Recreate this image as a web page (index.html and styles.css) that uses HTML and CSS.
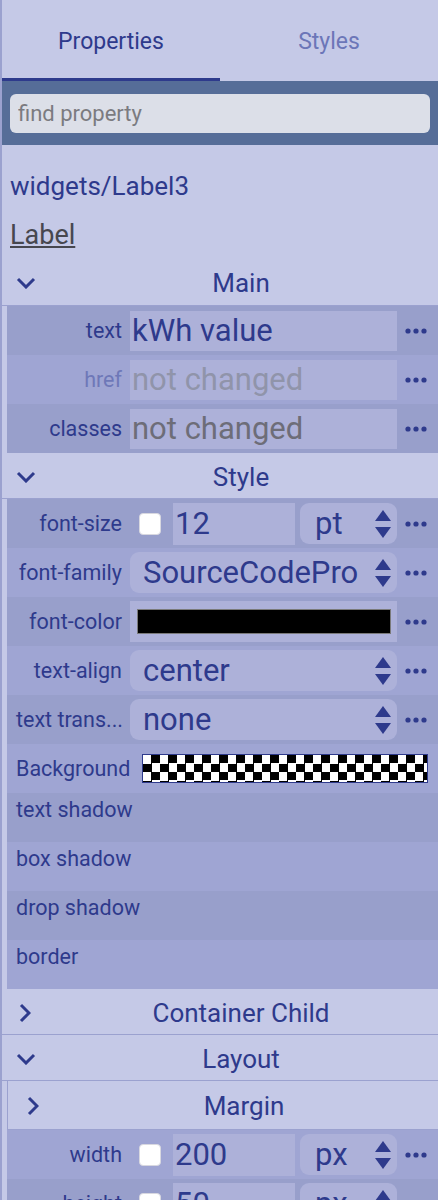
FILE: index.html
```html
<!DOCTYPE html>
<html lang="en">
<head>
    <meta charset="UTF-8">
    <meta name="viewport" content="width=device-width, initial-scale=1.0">
    <title>Properties</title>
    <link rel="stylesheet" href="styles.css">
</head>
<body>
<div class="panel">
    <div class="tabs">
        <div class="tab active">Properties</div>
        <div class="tab">Styles</div>
    </div>

    <div class="search">
        <input type="text" placeholder="find property">
    </div>

    <div class="path">widgets/Label3</div>
    <div class="type"><a href="#">Label</a></div>

    <!-- Main -->
    <div class="group-head top">
        <span class="chev"><svg width="20" height="12" viewBox="0 0 20 12"><polyline points="2,2 10,10 18,2"/></svg></span>
        <span class="title">Main</span>
    </div>
    <div class="group-body">
        <div class="prop">
            <label>text</label>
            <div class="val">kWh value</div>
            <span class="more"><svg width="22" height="6" viewBox="0 0 22 6"><circle cx="3" cy="3" r="2.6"/><circle cx="11" cy="3" r="2.6"/><circle cx="19" cy="3" r="2.6"/></svg></span>
        </div>
        <div class="prop">
            <label class="dim">href</label>
            <div class="val empty light">not changed</div>
            <span class="more"><svg width="22" height="6" viewBox="0 0 22 6"><circle cx="3" cy="3" r="2.6"/><circle cx="11" cy="3" r="2.6"/><circle cx="19" cy="3" r="2.6"/></svg></span>
        </div>
        <div class="prop">
            <label>classes</label>
            <div class="val empty">not changed</div>
            <span class="more"><svg width="22" height="6" viewBox="0 0 22 6"><circle cx="3" cy="3" r="2.6"/><circle cx="11" cy="3" r="2.6"/><circle cx="19" cy="3" r="2.6"/></svg></span>
        </div>
    </div>

    <!-- Style -->
    <div class="group-head">
        <span class="chev"><svg width="20" height="12" viewBox="0 0 20 12"><polyline points="2,2 10,10 18,2"/></svg></span>
        <span class="title">Style</span>
    </div>
    <div class="group-body">
        <div class="prop">
            <label>font-size</label>
            <div class="combo">
                <span class="check"></span>
                <span class="num">12</span>
                <span class="select unit"><span class="sel-text">pt</span><svg width="16" height="28" viewBox="0 0 16 28"><polygon points="8,0 16,11 0,11"/><polygon points="0,17 16,17 8,28"/></svg></span>
            </div>
            <span class="more"><svg width="22" height="6" viewBox="0 0 22 6"><circle cx="3" cy="3" r="2.6"/><circle cx="11" cy="3" r="2.6"/><circle cx="19" cy="3" r="2.6"/></svg></span>
        </div>
        <div class="prop">
            <label>font-family</label>
            <span class="select"><span class="sel-text">SourceCodePro</span><svg width="16" height="28" viewBox="0 0 16 28"><polygon points="8,0 16,11 0,11"/><polygon points="0,17 16,17 8,28"/></svg></span>
            <span class="more"><svg width="22" height="6" viewBox="0 0 22 6"><circle cx="3" cy="3" r="2.6"/><circle cx="11" cy="3" r="2.6"/><circle cx="19" cy="3" r="2.6"/></svg></span>
        </div>
        <div class="prop">
            <label>font-color</label>
            <div class="val color"><span class="swatch"></span></div>
            <span class="more"><svg width="22" height="6" viewBox="0 0 22 6"><circle cx="3" cy="3" r="2.6"/><circle cx="11" cy="3" r="2.6"/><circle cx="19" cy="3" r="2.6"/></svg></span>
        </div>
        <div class="prop">
            <label>text-align</label>
            <span class="select"><span class="sel-text">center</span><svg width="16" height="28" viewBox="0 0 16 28"><polygon points="8,0 16,11 0,11"/><polygon points="0,17 16,17 8,28"/></svg></span>
            <span class="more"><svg width="22" height="6" viewBox="0 0 22 6"><circle cx="3" cy="3" r="2.6"/><circle cx="11" cy="3" r="2.6"/><circle cx="19" cy="3" r="2.6"/></svg></span>
        </div>
        <div class="prop">
            <label>text trans...</label>
            <span class="select"><span class="sel-text">none</span><svg width="16" height="28" viewBox="0 0 16 28"><polygon points="8,0 16,11 0,11"/><polygon points="0,17 16,17 8,28"/></svg></span>
            <span class="more"><svg width="22" height="6" viewBox="0 0 22 6"><circle cx="3" cy="3" r="2.6"/><circle cx="11" cy="3" r="2.6"/><circle cx="19" cy="3" r="2.6"/></svg></span>
        </div>
        <div class="prop wide">
            <label>Background</label>
            <span class="checker"></span>
        </div>
        <div class="prop sub">text shadow</div>
        <div class="prop sub">box shadow</div>
        <div class="prop sub">drop shadow</div>
        <div class="prop sub">border</div>
    </div>

    <!-- Container Child -->
    <div class="group-head">
        <span class="chev closed"><svg width="12" height="20" viewBox="0 0 12 20"><polyline points="2,2 10,10 2,18"/></svg></span>
        <span class="title">Container Child</span>
    </div>

    <!-- Layout -->
    <div class="group-head">
        <span class="chev"><svg width="20" height="12" viewBox="0 0 20 12"><polyline points="2,2 10,10 18,2"/></svg></span>
        <span class="title">Layout</span>
    </div>
    <div class="group-body">
        <div class="group-head nested">
            <span class="chev closed"><svg width="12" height="20" viewBox="0 0 12 20"><polyline points="2,2 10,10 2,18"/></svg></span>
            <span class="title">Margin</span>
        </div>
        <div class="prop">
            <label>width</label>
            <div class="combo">
                <span class="check"></span>
                <span class="num">200</span>
                <span class="select unit"><span class="sel-text">px</span><svg width="16" height="28" viewBox="0 0 16 28"><polygon points="8,0 16,11 0,11"/><polygon points="0,17 16,17 8,28"/></svg></span>
            </div>
            <span class="more"><svg width="22" height="6" viewBox="0 0 22 6"><circle cx="3" cy="3" r="2.6"/><circle cx="11" cy="3" r="2.6"/><circle cx="19" cy="3" r="2.6"/></svg></span>
        </div>
        <div class="prop">
            <label>height</label>
            <div class="combo">
                <span class="check"></span>
                <span class="num">50</span>
                <span class="select unit"><span class="sel-text">px</span><svg width="16" height="28" viewBox="0 0 16 28"><polygon points="8,0 16,11 0,11"/><polygon points="0,17 16,17 8,28"/></svg></span>
            </div>
            <span class="more"><svg width="22" height="6" viewBox="0 0 22 6"><circle cx="3" cy="3" r="2.6"/><circle cx="11" cy="3" r="2.6"/><circle cx="19" cy="3" r="2.6"/></svg></span>
        </div>
    </div>
</div>
</body>
</html>
```

FILE: styles.css
```css
body {
    margin: 0;
    font-family: Roboto, "Noto Sans", sans-serif;
    background: #c5c9e7;
    color: #2e3a8c;
}
.panel {
    border-left: 2px solid #9ba1cf;
    min-height: 100vh;
}

/* tabs */
.tabs {
    display: flex;
}
.tab {
    flex: 1;
    height: 78px;
    line-height: 84px;
    text-align: center;
    font-size: 23px;
    color: #6c76b8;
    border-bottom: 3px solid transparent;
}
.tab.active {
    color: #2e3a8c;
    border-bottom-color: #2e3a8c;
}

/* search */
.search {
    background: #566d98;
    padding: 13px 8px 12px;
}
.search input {
    display: block;
    box-sizing: border-box;
    width: 100%;
    height: 39px;
    border: none;
    border-radius: 6px;
    background: #dcdfe8;
    padding: 0 8px;
    font-family: Roboto, "Noto Sans", sans-serif;
    font-size: 22px;
    outline: none;
}
.search input::placeholder {
    color: #7b7b80;
}

.path {
    padding: 17px 0 0 8px;
    line-height: 48px;
    font-size: 26px;
}
.type {
    padding: 2px 0 0 8px;
    line-height: 46px;
    font-size: 27px;
}
.type a {
    color: #47474f;
}

/* group headers */
.group-head {
    display: flex;
    align-items: center;
    height: 46px;
    padding-top: 2px;
    box-sizing: border-box;
    border-bottom: 1px solid #9ba1cf;
}
.group-head.top {
    height: 48px;
    padding-top: 3px;
}
.group-head .chev {
    width: 42px;
    box-sizing: border-box;
    padding-left: 14px;
    display: flex;
}
.group-head .chev.closed {
    padding-left: 17px;
}
.group-head .title {
    flex: 1;
    text-align: center;
    font-size: 26px;
}
.group-head svg polyline {
    fill: none;
    stroke: #2e3a8c;
    stroke-width: 3;
}
.group-head.nested {
    height: 49px;
    border-left: 1px solid #9ba1cf;
}
.group-head.nested .chev {
    padding-left: 19px;
}

.group-body {
    margin-left: 5px;
}

/* property rows */
.prop {
    display: grid;
    grid-template-columns: 123px 1fr 41px;
    align-items: center;
    height: 49px;
    background: #989fcb;
}
.prop:nth-child(even) {
    background: #9fa5d3;
}
.prop label {
    box-sizing: border-box;
    padding: 0 8px 0 9px;
    text-align: right;
    font-size: 21.5px;
    white-space: nowrap;
}
.prop label.dim {
    color: #6e78b8;
}
.val {
    height: 40px;
    line-height: 40px;
    padding-left: 2px;
    background: #adb1d9;
    font-size: 31px;
    white-space: nowrap;
    overflow: hidden;
}
.val.empty {
    color: #6d6d78;
}
.val.empty.light {
    color: #9094aa;
}
.more {
    display: flex;
    padding-left: 8px;
}
.more svg {
    fill: #2e3a8c;
}

/* selects and combo inputs */
.select {
    display: flex;
    align-items: center;
    height: 41px;
    padding: 0 6px 0 13px;
    background: #adb1d9;
    border-radius: 9px;
    font-size: 31px;
}
.select .sel-text {
    flex: 1;
    white-space: nowrap;
}
.select svg {
    fill: #2e3a8c;
}
.combo {
    display: flex;
    align-items: center;
}
.check {
    width: 20px;
    height: 20px;
    margin-left: 9px;
    background: #fff;
    border: 1px solid #d8d8e0;
    border-radius: 4px;
}
.num {
    width: 120px;
    height: 42px;
    line-height: 42px;
    margin-left: 12px;
    padding-left: 2px;
    background: #adb1d9;
    font-size: 31px;
}
.select.unit {
    flex: 1;
    margin-left: 5px;
    padding-left: 15px;
}

/* colour */
.val.color {
    display: flex;
    align-items: center;
    height: 41px;
    padding: 0 6px 0 7px;
}
.swatch {
    flex: 1;
    height: 23px;
    background: #000;
    border: 1px solid #7a7a7a;
}

/* background row */
.prop.wide {
    display: flex;
}
.prop.wide label {
    text-align: left;
    padding-right: 0;
}
.checker {
    flex: 1;
    height: 27px;
    margin: 0 10px 0 12px;
    border: 1px solid #2e3a8c;
    background: conic-gradient(#000 0 25%, #fff 0 50%, #000 0 75%, #fff 0) 0 0 / 17px 17px;
}

/* collapsed sub rows */
.prop.sub {
    display: block;
    box-sizing: border-box;
    padding: 4px 9px 0;
    line-height: 26px;
    font-size: 21.5px;
}
```
